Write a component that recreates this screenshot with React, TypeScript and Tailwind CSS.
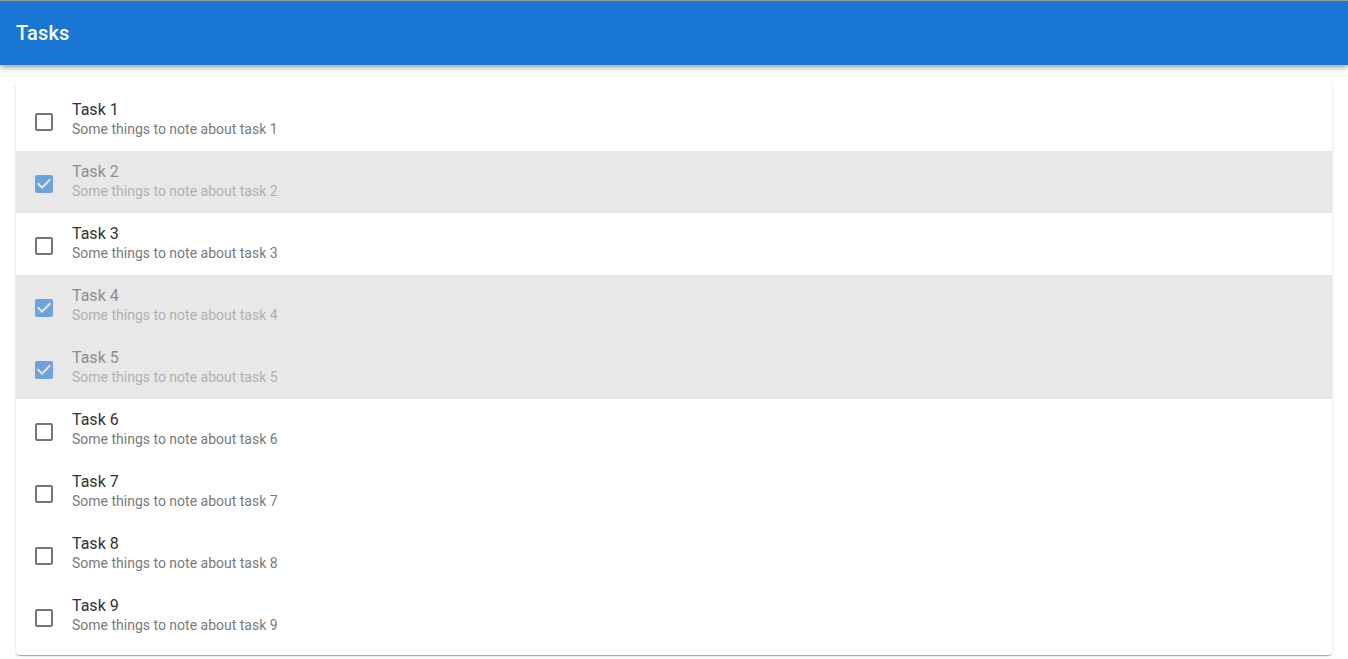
import { useState } from "react";

interface Task {
  id: number;
  title: string;
  note: string;
  done: boolean;
}

const INITIAL_TASKS: Task[] = Array.from({ length: 9 }, (_, i) => ({
  id: i + 1,
  title: `Task ${i + 1}`,
  note: `Some things to note about task ${i + 1}`,
  done: [2, 4, 5].includes(i + 1),
}));

function CheckIcon({ checked }: { checked: boolean }) {
  return (
    <svg viewBox="0 0 24 24" className="h-6 w-6" aria-hidden>
      {checked ? (
        <path
          fill="#1976d2"
          d="M19 3H5c-1.11 0-2 .9-2 2v14c0 1.1.89 2 2 2h14c1.11 0 2-.9 2-2V5c0-1.1-.89-2-2-2zm-9 14l-5-5 1.41-1.41L10 14.17l7.59-7.59L19 8l-9 9z"
        />
      ) : (
        <path
          fill="rgba(0,0,0,0.54)"
          d="M19 5v14H5V5h14m0-2H5c-1.1 0-2 .9-2 2v14c0 1.1.9 2 2 2h14c1.1 0 2-.9 2-2V5c0-1.1-.9-2-2-2z"
        />
      )}
    </svg>
  );
}

export default function App() {
  const [tasks, setTasks] = useState(INITIAL_TASKS);

  const toggle = (id: number) =>
    setTasks((prev) => prev.map((t) => (t.id === id ? { ...t, done: !t.done } : t)));

  return (
    <div className="min-h-screen bg-white font-['Roboto',sans-serif] border-t border-[#a3a3a3]">
      <header className="flex h-16 items-center bg-[#1976d2] px-4 text-white shadow-[0_2px_4px_-1px_rgba(0,0,0,0.2),0_4px_5px_0_rgba(0,0,0,0.14),0_1px_10px_0_rgba(0,0,0,0.12)]">
        <h1 className="text-[20px] font-medium tracking-[0.15px]">Tasks</h1>
      </header>

      <main className="px-4 pt-4 pb-4">
        <div className="rounded bg-white py-2 shadow-[0_2px_1px_-1px_rgba(0,0,0,0.2),0_1px_1px_0_rgba(0,0,0,0.14),0_1px_3px_0_rgba(0,0,0,0.12)]">
          <ul>
            {tasks.map((task) => (
              <li
                key={task.id}
                onClick={() => toggle(task.id)}
                className={
                  task.done
                    ? "flex h-[62px] cursor-pointer items-center bg-[#e8e8e8] px-4"
                    : "flex h-[62px] cursor-pointer items-center bg-white px-4"
                }
              >
                <div className={task.done ? "w-10 shrink-0 pt-[3px] opacity-60" : "w-10 shrink-0 pt-[3px]"}>
                  <CheckIcon checked={task.done} />
                </div>
                <div className={task.done ? "min-w-0 pb-[2px] opacity-50" : "min-w-0 pb-[2px]"}>
                  <p className="text-[16px] leading-[20px] text-[#333]">{task.title}</p>
                  <p className="text-[14px] leading-[18px] text-[#7a7a7a]">{task.note}</p>
                </div>
              </li>
            ))}
          </ul>
        </div>
      </main>
    </div>
  );
}
